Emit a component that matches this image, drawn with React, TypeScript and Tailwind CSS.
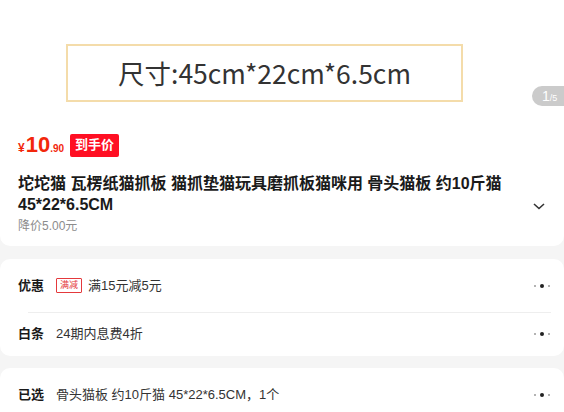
import React from "react"

const font = { fontFamily: '"Liberation Sans", "Noto Sans CJK SC", sans-serif' }

function Dots() {
  return (
    <div className="flex items-center gap-[4px] mr-[14px]">
      <span className="w-[2px] h-[2px] rounded-full bg-[#9a9a9a]" />
      <span className="w-[4px] h-[4px] rounded-full bg-[#222]" />
      <span className="w-[2px] h-[2px] rounded-full bg-[#9a9a9a]" />
    </div>
  )
}

function Row({ label, children, h }: { label: string; children: React.ReactNode; h: string }) {
  return (
    <div className={`flex items-center pl-[18px] ${h}`}>
      <div className="w-[38px] shrink-0 text-[13px] font-bold text-[#1a1a1a]">{label}</div>
      <div className="flex-1 flex items-center text-[13px] text-[#333]">{children}</div>
      <Dots />
    </div>
  )
}

export default function App() {
  return (
    <div className="w-[564px] h-[412px] overflow-hidden bg-[#f5f5f5]" style={font}>
      <div className="bg-white rounded-b-[10px]">
        {/* product image */}
        <div className="relative h-[128px] pt-[44px]">
          <div className="ml-[66px] w-[397px] h-[58px] border-2 border-[#f4dcaa] flex items-center justify-center">
            <span
              className="text-[26.5px] text-[#333] leading-none"
              style={{ fontFamily: '"Noto Sans CJK SC", sans-serif' }}
            >
              尺寸:45cm*22cm*6.5cm
            </span>
          </div>
          <div className="absolute right-[-10px] top-[86px] h-[20px] w-[42px] rounded-full bg-[#cbcbcb] flex items-center pl-[10px] text-white">
            <span className="text-[14px] leading-none">1</span>
            <span className="text-[9px] leading-none mt-[4px]">/5</span>
          </div>
        </div>

        {/* price */}
        <div className="flex items-center pl-[18px] h-[24px] mt-[5px]">
          <div className="flex items-baseline text-[#f2270c] font-bold">
            <span className="text-[12px]">¥</span>
            <span className="text-[22px] leading-none ml-[1px]">10</span>
            <span className="text-[10px]">.90</span>
          </div>
          <div className="ml-[6px] h-[23px] px-[5px] rounded-[2px] bg-[#ff0f23] text-white text-[13px] font-bold flex items-center">
            到手价
          </div>
        </div>

        {/* title */}
        <div className="flex items-center pt-[16px] pb-[12px]">
          <div className="w-[525px] pl-[18px] pr-[10px]">
            <div className="text-[16px] leading-[21px] font-bold text-[#1a1a1a]">
              坨坨猫 瓦楞纸猫抓板 猫抓垫猫玩具磨抓板猫咪用 骨头猫板 约10斤猫 45*22*6.5CM
            </div>
            <div className="text-[12px] text-[#8c8c8c] mt-[3px] leading-[16px]">降价5.00元</div>
          </div>
          <svg width="12" height="7" viewBox="0 0 12 7" className="ml-[8px] mt-[6px]">
            <polyline points="1,1 6,5.5 11,1" fill="none" stroke="#333" strokeWidth="1.6" />
          </svg>
        </div>
      </div>

      <div className="bg-white rounded-[10px] mt-[13px] pb-[1px]">
        <Row label="优惠" h="h-[53px]">
          <span className="h-[15px] w-[26px] border border-[#e4393c] rounded-[1px] text-[9px] leading-none text-[#e4393c] flex items-center justify-center mr-[6px]">
            满减
          </span>
          满15元减5元
        </Row>
        <div className="h-px bg-[#eeeeee] ml-[28px] mr-[13px]" />
        <Row label="白条" h="h-[42px]">
          24期内息费4折
        </Row>
      </div>

      <div className="bg-white rounded-[10px] mt-[12px]">
        <Row label="已选" h="h-[53px]">
          骨头猫板 约10斤猫 45*22*6.5CM，1个
        </Row>
      </div>
    </div>
  )
}
